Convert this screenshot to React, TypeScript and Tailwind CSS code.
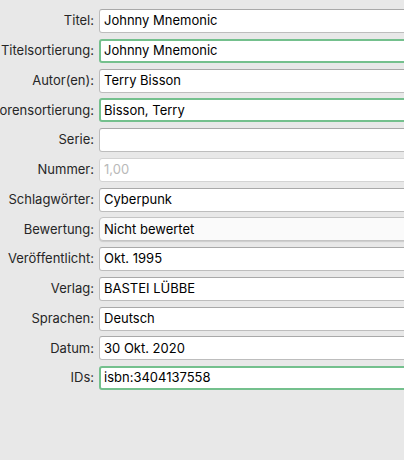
import React from "react";

type Row = { label: string; value: string; kind?: "normal" | "focus" | "disabled" | "button" };

const rows: Row[] = [
  { label: "Titel:", value: "Johnny Mnemonic" },
  { label: "Titelsortierung:", value: "Johnny Mnemonic", kind: "focus" },
  { label: "Autor(en):", value: "Terry Bisson" },
  { label: "Autorensortierung:", value: "Bisson, Terry", kind: "focus" },
  { label: "Serie:", value: "" },
  { label: "Nummer:", value: "1,00", kind: "disabled" },
  { label: "Schlagwörter:", value: "Cyberpunk" },
  { label: "Bewertung:", value: "Nicht bewertet", kind: "button" },
  { label: "Veröffentlicht:", value: "Okt. 1995" },
  { label: "Verlag:", value: "BASTEI LÜBBE" },
  { label: "Sprachen:", value: "Deutsch" },
  { label: "Datum:", value: "30 Okt. 2020" },
  { label: "IDs:", value: "isbn:3404137558", kind: "focus" },
];

function Field({ row }: { row: Row }) {
  const kind = row.kind ?? "normal";
  if (kind === "focus") {
    return (
      <div className="h-[24px] w-[330px] rounded-[3px] border-2 border-[#74c08d] bg-white flex items-center pl-[3px] text-[13px] text-black">
        {row.value}
      </div>
    );
  }
  if (kind === "button") {
    return (
      <div className="h-[24px] w-[330px] rounded-[4px] border border-[#c4c4c4] bg-[#fafafa] shadow-[0_1px_1px_rgba(0,0,0,0.12)] flex items-center pl-[4px] text-[13px] text-black">
        {row.value}
      </div>
    );
  }
  if (kind === "disabled") {
    return (
      <div className="h-[24px] w-[330px] rounded-[3px] border border-[#d3d3d3] bg-white flex items-center pl-[4px] text-[13px] text-[#b9b9b9]">
        {row.value}
      </div>
    );
  }
  return (
    <div className="h-[24px] w-[330px] rounded-[3px] border border-[#bdbdbd] border-t-[#a9a9a9] bg-white flex items-center pl-[4px] text-[13px] text-black">
      {row.value}
    </div>
  );
}

export default function App() {
  return (
    <div
      className="w-[404px] h-[460px] overflow-hidden bg-[#e8e8e8] pt-[9px]"
      style={{ fontFamily: "Inter, 'Noto Sans', sans-serif" }}
    >
      <div className="flex flex-col gap-[5.75px]">
        {rows.map((r) => (
          <div key={r.label} className="flex items-center">
            <div className="w-[94px] shrink-0 flex justify-end whitespace-nowrap text-[13px] text-[#262626]">
              <span>{r.label}</span>
            </div>
            <div className="ml-[5px] shrink-0">
              <Field row={r} />
            </div>
          </div>
        ))}
      </div>
    </div>
  );
}
